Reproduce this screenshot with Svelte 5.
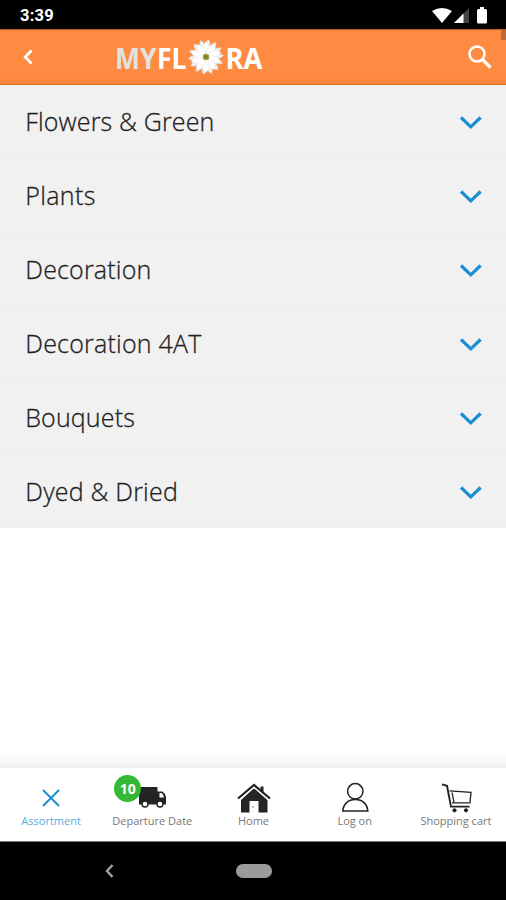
<script>
  const categories = ['Flowers & Green', 'Plants', 'Decoration', 'Decoration 4AT', 'Bouquets', 'Dyed & Dried'];
  const widths = [189, 70, 126, 176, 109.5, 152.5];
  const outer = Array.from({ length: 14 }, (_, i) => (i * 360) / 14 + 8);
  const inner = Array.from({ length: 10 }, (_, i) => i * 36);
</script>

<div class="screen">
  <div class="status">
    <span class="clock">3:39</span>
    <svg class="signals" width="58" height="20" viewBox="0 0 58 20">
      <path d="M0 5Q10 -1 20 5L10 17Z" transform="translate(0 1)" fill="#fff" />
      <path d="M37 3V18H22Z" fill="#444" />
      <path d="M31.500 8.500V18H22Z" fill="#fff" />
      <path d="M45 5.500Q45 4 46.500 4H48V2H52V4H53.500Q55 4 55 5.500V17Q55 18.500 53.500 18.500H46.500Q45 18.500 45 17Z" fill="#fff" />
    </svg>
  </div>

  <header>
    <svg class="back" width="14" height="18" viewBox="0 0 14 18">
      <path d="M10.500 2.500L4.200 9L10.500 15.500" fill="none" stroke="#fff" stroke-width="2.700" />
    </svg>
    <div class="logo">
      <svg class="word" width="71.500" height="46" viewBox="0 0 71.5 46">
        <text x="-1" y="35" textLength="41.500" lengthAdjust="spacingAndGlyphs" fill="#e4e2e1">MY</text>
        <text x="41" y="35" textLength="29.500" lengthAdjust="spacingAndGlyphs" fill="#fff">FL</text>
      </svg>
      <svg class="flower" width="36" height="36" viewBox="-18 -18 36 36">
        {#each outer as a}
          <path d="M0 0C-4 -7 -3.600 -14 0 -17.700C3.600 -14 4 -7 0 0Z" transform="rotate({a})" fill="#f1efed" stroke="#d5c8c0" stroke-width=".4" />
        {/each}
        {#each inner as a}
          <path d="M0 0C-4.800 -6 -4.500 -11 0 -15.500C4.500 -11 4.800 -6 0 0Z" transform="rotate({a})" fill="#fff" stroke="#dedddd" stroke-width=".4" />
        {/each}
        <circle r="3.200" fill="#a49b3c" />
        <circle r="1.700" fill="#758320" />
      </svg>
      <svg class="word" width="38" height="46" viewBox="0 0 38 46">
        <text x="1.500" y="35" textLength="37" lengthAdjust="spacingAndGlyphs" fill="#fff">RA</text>
      </svg>
    </div>
    <svg class="search" width="26" height="26" viewBox="0 0 26 26">
      <circle cx="10" cy="10" r="7.500" fill="none" stroke="#fff" stroke-width="2.500" />
      <path d="M15.500 15.500L23.500 23.500" stroke="#fff" stroke-width="3.200" />
    </svg>
    <i class="scroll"></i>
  </header>

  <main>
    {#each categories as name, i}
      <div class="row">
        <svg class="name" width="260" height="40" viewBox="0 0 260 40">
          <text x="0.300" y="28.500" textLength={widths[i]}>{name}</text>
        </svg>
        <svg width="24" height="16" viewBox="0 0 24 16">
          <path d="M2 3.500L11.800 12.900L21.600 3.500" fill="none" stroke="#1690d2" stroke-width="3.200" />
        </svg>
      </div>
    {/each}
  </main>

  <div class="blank"></div>

  <nav>
    <div class="tab active">
      <svg width="36" height="34" viewBox="0 0 36 34">
        <path d="M10 9L26 25M26 9L10 25" stroke="#1b8fce" stroke-width="2" />
      </svg>
      <span>Assortment</span>
    </div>
    <div class="tab">
      <svg width="36" height="34" viewBox="0 0 36 34">
        <path d="M5 6H23.500V10.500H28.500Q31 12 32 16V23.500H5Z" fill="#242424" />
        <path d="M25.500 12H27.700Q29.300 13 30 16.500H25.500Z" fill="#fff" />
        <circle cx="11" cy="23" r="3" fill="#fff" stroke="#222" stroke-width="1.400" />
        <circle cx="26" cy="23" r="3" fill="#fff" stroke="#222" stroke-width="1.400" />
      </svg>
      <b class="badge">10</b>
      <span>Departure Date</span>
    </div>
    <div class="tab">
      <svg width="36" height="34" viewBox="0.5 0 36 34">
        <path d="M5.500 19L18.500 7L32 19V31.500H23V20H14V31.500H5.500Z" fill="#252525" />
        <path d="M25 10V5.500H28V13" fill="#252525" />
        <path d="M3.500 19L18.500 6.500L33.500 19" fill="none" stroke="#fff" stroke-width="1.200" />
        <path d="M2.500 17.500L18.500 4L34.500 17.500" fill="none" stroke="#222" stroke-width="2.200" />
        <path d="M17.500 25V27" stroke="#888" stroke-width="1" />
      </svg>
      <span>Home</span>
    </div>
    <div class="tab">
      <svg width="36" height="34" viewBox="0.7 0.7 36 34">
        <circle cx="19" cy="11" r="7.700" fill="none" stroke="#222" stroke-width="1.500" />
        <path d="M6.500 30.700C7 23.500 12 19.200 19 19.200S31 23.500 31.500 30.700Z" fill="none" stroke="#222" stroke-width="1.600" />
      </svg>
      <span>Log on</span>
    </div>
    <div class="tab">
      <svg width="36" height="34" viewBox="0 0.7 36 34" fill="none" stroke="#222">
        <path d="M4 4L9 5.500L13 26.300H31.500" stroke-width="1.900" />
        <path d="M11.500 10.500L33 12L32 22.500L14 22.500M14 12L16 22" stroke-width="1.300" />
        <circle cx="16.500" cy="30" r="1.600" fill="#111" stroke-width="1" />
        <circle cx="28" cy="30" r="1.600" fill="#111" stroke-width="1" />
      </svg>
      <span>Shopping cart</span>
    </div>
  </nav>

  <div class="system">
    <svg class="sysback" width="12" height="16" viewBox="0 0 12 16">
      <path d="M8.500 2L3 8L8.500 14" fill="none" stroke="#a2a2a2" stroke-width="2.400" />
    </svg>
    <i class="pill"></i>
  </div>
</div>

<style>
  .screen {
    width: 506px;
    height: 900px;
    display: flex;
    flex-direction: column;
    overflow: hidden;
    background: #fff;
    font-family: 'Open Sans', 'Noto Sans', sans-serif;
  }
  svg { display: block; flex: none; }
  .status {
    height: 29px;
    flex: none;
    background: #000;
    display: flex;
    justify-content: space-between;
    padding: 0 16px 0 20px;
  }
  .clock {
    color: #fff;
    font: 700 16.500px/31px Roboto, sans-serif;
    letter-spacing: .2px;
  }
  .signals { margin-top: 5px; }
  header {
    height: 56px;
    flex: none;
    box-sizing: border-box;
    border-top: 1px solid #b45b22;
    border-bottom: 1px solid #de6c18;
    background: linear-gradient(#ff8b42 75%, #f9853f);
    display: flex;
    align-items: center;
    position: relative;
  }
  .back { margin-left: 21px; }
  .logo { display: flex; align-items: center; margin-left: 81px; }
  .word { overflow: visible; font-size: 28px; font-weight: 700; font-family: 'Open Sans', sans-serif; }
  .search { margin-left: auto; margin-right: 13px; }
  .scroll {
    position: absolute;
    right: 0;
    top: 0;
    width: 5px;
    height: 10px;
    background: #bc6a3a;
  }
  main { height: 443px; flex: none; display: flex; flex-direction: column; background: #f1f1f1; }
  .row {
    flex: 1;
    box-sizing: border-box;
    border-bottom: 1px solid #ececec;
    display: flex;
    align-items: center;
    justify-content: space-between;
    padding: 2px 23px 0 25px;
  }
  .name { font-size: 25px; font-weight: 300; fill: #222; stroke: #222; stroke-width: .3px; }
  .blank { flex: 1; background: linear-gradient(#fff calc(100% - 16px), #f8f8f8 calc(100% - 8px), #eee); }
  nav {
    height: 74px;
    flex: none;
    box-sizing: border-box;
    border-bottom: 1px solid #777;
    background: #fff;
    display: flex;
  }
  .tab {
    flex: 1;
    display: flex;
    flex-direction: column;
    align-items: center;
    position: relative;
    padding: 13px 0 0 1px;
    color: #777;
    font-size: 11px;
    line-height: 12px;
    white-space: nowrap;
  }
  .active { color: #5aa9dc; }
  .badge {
    position: absolute;
    left: 13px;
    top: 7px;
    width: 27px;
    height: 27px;
    border-radius: 50%;
    background: #35b835;
    color: #fff;
    font-size: 14px;
    line-height: 27px;
    text-align: center;
  }
  .system {
    height: 58px;
    flex: none;
    background: #000;
    display: flex;
    align-items: center;
  }
  .sysback { margin-left: 104px; }
  .pill { width: 36px; height: 14px; border-radius: 7px; background: #9b9b9b; margin-left: 120px; }
</style>
